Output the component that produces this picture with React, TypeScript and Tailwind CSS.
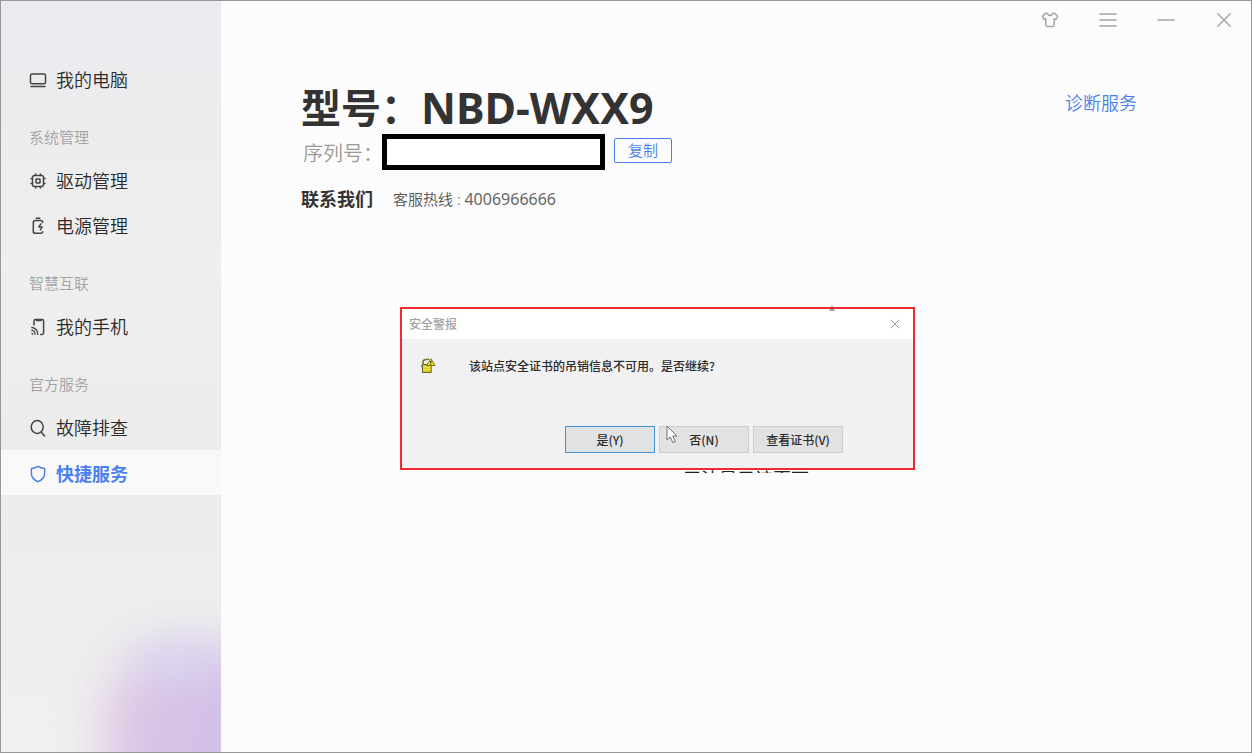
import type { ReactNode } from "react";

const ui = "font-['Noto_Sans','Noto_Sans_CJK_SC',sans-serif]";

function Icon({ children, className }: { children: ReactNode; className?: string }) {
  return (
    <svg
      viewBox="0 0 18 18"
      width="18"
      height="18"
      fill="none"
      stroke="currentColor"
      strokeWidth="1.5"
      strokeLinecap="round"
      strokeLinejoin="round"
      aria-hidden="true"
      className={className}
    >
      {children}
    </svg>
  );
}

const icons = {
  computer: (
    <Icon>
      <rect x="1.5" y="3" width="15" height="9.8" rx="1.6" />
      <path d="M2 15.600h14" />
    </Icon>
  ),
  chip: (
    <Icon>
      <rect x="3.5" y="3.500" width="11" height="11" rx="2" />
      <rect x="7" y="7" width="4" height="4" rx=".4" />
      <path d="M6.600 2v1.200M11.400 2v1.200M6.600 14.800v1.200M11.400 14.800v1.200M2 6.600h1.200M2 11.400h1.200M14.800 6.600h1.200M14.800 11.400h1.200" />
    </Icon>
  ),
  battery: (
    <Icon>
      <path d="M7.200 1.300h3.600" />
      <path d="M13.700 5.500c0-1.200-.8-1.900-1.900-1.900H6.200C5.100 3.600 4.300 4.300 4.300 5.500v8.900c0 1.200.8 1.900 1.900 1.900h5.600c1 0 1.700-.6 1.900-1.500" />
      <path d="M11.900 6.800 9.800 10h3.400l-1.800 2.900" strokeWidth="1.400" />
    </Icon>
  ),
  phone: (
    <Icon>
      <path d="M5 7V2.900c0-.8.600-1.400 1.400-1.400h6.800c.8 0 1.400.6 1.400 1.400v12.200c0 .8-.6 1.400-1.400 1.400H11.700" />
      <path d="M7.800 2.400h4" strokeWidth="1.800" />
      <path d="M2.800 9.500c3.500.4 5.800 3 6.100 7M2.800 12.200c1.900.3 3.100 1.800 3.300 4.200M2.900 15.200l.7 1" strokeWidth="1.300" />
    </Icon>
  ),
  search: (
    <Icon>
      <ellipse cx="8.200" cy="8" rx="6" ry="6.500" />
      <path d="m12.400 13.300 3.200 3.700" />
    </Icon>
  ),
  shield: (
    <Icon>
      <path d="M9 1.300c2 1.300 4.200 1.900 6.600 2.200v5.300c0 3.600-2.300 6.100-6.600 7.900-4.300-1.800-6.600-4.300-6.600-7.900V3.500C4.800 3.200 7 2.600 9 1.300Z" />
    </Icon>
  ),
};

type Item = { label: string; icon: ReactNode; active?: boolean };
const groups: { title?: string; items: Item[] }[] = [
  { items: [{ label: "我的电脑", icon: icons.computer }] },
  {
    title: "系统管理",
    items: [
      { label: "驱动管理", icon: icons.chip },
      { label: "电源管理", icon: icons.battery },
    ],
  },
  { title: "智慧互联", items: [{ label: "我的手机", icon: icons.phone }] },
  {
    title: "官方服务",
    items: [
      { label: "故障排查", icon: icons.search },
      { label: "快捷服务", icon: icons.shield, active: true },
    ],
  },
];

function Sidebar() {
  return (
    <aside className="relative w-[220px] shrink-0 overflow-hidden bg-[linear-gradient(180deg,#e9ebf0_0%,#ececed_15%,#efefef_35%,#ececec_58%,#ededed_75%,#f0f0f0_100%)] pt-14">
      <div className="absolute -right-24 -bottom-24 h-[200px] w-[212px] rounded-[72px] bg-[linear-gradient(100deg,#e0c6e0_0%,#d5c2e8_35%,#d2bde3_100%)] blur-[24px]" />
      <div className="absolute right-2 bottom-[70px] h-[40px] w-[80px] rounded-full bg-[#d8d6f2] opacity-60 blur-[16px]" />
      <nav className="relative">
        {groups.map((group, i) => (
          <div key={i}>
            {group.title && (
              <h2 className="flex h-14 items-center pt-3.5 pl-7 text-[15px] leading-5 font-[350] text-[#a3a3a3]">
                {group.title}
              </h2>
            )}
            {group.items.map((item) => (
              <a
                key={item.label}
                href="#"
                aria-current={item.active ? "page" : undefined}
                className={
                  item.active
                    ? "flex h-[45px] items-center gap-[9px] bg-[#f9f9f9] pt-0.5 pl-7 text-lg font-bold text-[#4a7ff0]"
                    : "flex h-[45px] items-center gap-[9px] pt-px pl-7 text-lg font-[350] text-[#2a2a2a]"
                }
              >
                <span className={item.active ? "text-[#4a7ff0]" : "text-[#444]"}>{item.icon}</span>
                {item.label}
              </a>
            ))}
          </div>
        ))}
      </nav>
    </aside>
  );
}

function WindowControls() {
  return (
    <header className="flex h-[38px] items-center justify-end gap-[38px] pr-[17px] text-[#a5a5a5]">
      <button type="button" aria-label="皮肤" className="flex size-5 items-center justify-center">
        <Icon>
          <path d="M6.300 2.200 4.100 2.600 1.400 5.500l1.700 2.900 1.700-.6v6.300c0 .9.600 1.400 1.400 1.400h5.600c.8 0 1.400-.5 1.400-1.400V7.800l1.700.6 1.700-2.900-2.700-2.900-2.200-.4C11.200 3.600 10.300 4.400 9 4.400S6.800 3.600 6.300 2.200Z" />
        </Icon>
      </button>
      <button type="button" aria-label="菜单" className="flex size-5 items-center justify-center">
        <Icon>
          <path d="M.8 3h16.400M.8 9h16.400M.8 15h16.400" />
        </Icon>
      </button>
      <button type="button" aria-label="最小化" className="flex size-5 items-center justify-center">
        <Icon>
          <path d="M.8 9h16.400" />
        </Icon>
      </button>
      <button type="button" aria-label="关闭" className="flex size-5 items-center justify-center">
        <Icon>
          <path d="m2.800 2.800 12.400 12.400M15.200 2.800 2.800 15.200" />
        </Icon>
      </button>
    </header>
  );
}

const plainButton =
  "h-[27px] w-[90px] border border-[#cdcdcf] bg-[#e2e2e4] text-xs font-medium leading-none text-[#2b2b2b]";

function SecurityAlert() {
  return (
    <section
      role="dialog"
      aria-labelledby="alert-title"
      className="relative w-[515px] border-2 border-[#ee2b33] bg-[#f1f0f2] font-['Noto_Sans_CJK_SC',sans-serif]"
    >
      <svg viewBox="0 0 6 6" width="6" height="6" className="absolute -top-1 right-[78px]" aria-hidden="true">
        <path d="M3 0 6 6H0Z" fill="#7a5055" opacity=".6" />
      </svg>
      <div className="flex h-[30px] items-center justify-between bg-white pr-[13px] pl-[7px]">
        <h2 id="alert-title" className="text-xs font-medium text-[#a2a2a2]">
          安全警报
        </h2>
        <button type="button" aria-label="关闭警报" className="text-[#999]">
          <svg viewBox="0 0 10 10" width="10" height="10" fill="none" stroke="currentColor" aria-hidden="true">
            <path d="m.7.7 8.600 8.600M9.300.7.7 9.300" />
          </svg>
        </button>
      </div>
      <div className="flex items-center gap-[33px] pt-[17px] pl-[18px]">
        <svg viewBox="0 0 16 16" width="16" height="16" aria-hidden="true">
          <path d="M3 6.500V4.300C3 2.500 4.300 1.500 6 1.500l3-.2" fill="none" stroke="#77731f" strokeWidth="1.600" />
          <path d="M2.500 6.500h8.700v8H2.500Z" fill="#d8cc29" stroke="#68651e" />
          <path d="M3.500 9h7M3.500 11.500h7" stroke="#f1e743" />
          <path d="m10.800.8 4.200 6.700H6.500Z" fill="#f3e81e" stroke="#77721a" strokeLinejoin="round" />
          <path d="M10.800 3v2.300M10.800 6v.8" stroke="#222" strokeWidth="1.200" />
          <path d="m.8 8.200 1.200-2 1.200 2-1.200 1.600Z" fill="#777980" />
        </svg>
        <p className="text-xs leading-5 font-medium text-[#2b2b2b]">该站点安全证书的吊销信息不可用。是否继续?</p>
      </div>
      <div className="mt-[50px] flex justify-end gap-1 pr-[70px] pb-[15px]">
        <button
          type="button"
          className="h-[27px] w-[90px] border border-[#4093d0] bg-[#e0e2e4] text-xs leading-none font-medium text-[#2b2b2b]"
        >
          是(Y)
        </button>
        <button type="button" className={plainButton}>
          否(N)
        </button>
        <button type="button" className={plainButton}>
          查看证书(V)
        </button>
      </div>
      <svg viewBox="0 0 13 19" width="13" height="19" className="absolute top-[116px] left-[264px]" aria-hidden="true">
        <path d="M1 1v14l3.300-3 2.500 5.600 2.500-1.100-2.500-5.400H11Z" fill="#fafafa" stroke="#737378" />
      </svg>
    </section>
  );
}

export default function App() {
  return (
    <div className={`flex min-h-screen border border-[#979797] bg-[#fcfcfc] text-[#333] ${ui}`}>
      <Sidebar />
      <main className="min-w-0 flex-1">
        <WindowControls />
        <div className="flex items-start justify-between pt-[42px] pr-[114px] pl-20">
          <div>
            <h1 className="flex h-[53px] items-center text-[40px] leading-[54px] font-bold">
              型号：<span className="text-[43px]">NBD-WXX9</span>
            </h1>
            <div className="flex h-9 items-center pl-0.5">
              <label htmlFor="serial" className="w-[79px] pt-1 text-xl font-[350] whitespace-nowrap text-[#999]">
                序列号：
              </label>
              <input id="serial" readOnly className="h-9 w-[223px] border-[5px] border-black bg-white px-2 text-base" />
              <button
                type="button"
                className="mb-1 ml-[9px] h-[25px] w-[58px] rounded-xs border border-[#4a7ff0] text-[15px] leading-none font-[350] text-[#4a7ff0]"
              >
                复制
              </button>
            </div>
            <div className="flex items-center gap-5 pt-[15px]">
              <h2 className="text-lg font-bold">联系我们</h2>
              <p className="text-[15px] font-[350] text-[#555]">
                客服热线 : <span className="text-base font-normal text-[#666]">4006966666</span>
              </p>
            </div>
          </div>
          <a href="#" className="pt-2 text-lg font-[350] text-[#4a7ff0]">
            诊断服务
          </a>
        </div>
        <div className="mt-[94px] ml-[179px] w-[515px]">
          <SecurityAlert />
          <div className="flex h-[3px] items-start overflow-hidden pl-[283px]">
            <p className="text-lg leading-[18px] text-[#222]">无法显示该页面</p>
          </div>
        </div>
      </main>
    </div>
  );
}
